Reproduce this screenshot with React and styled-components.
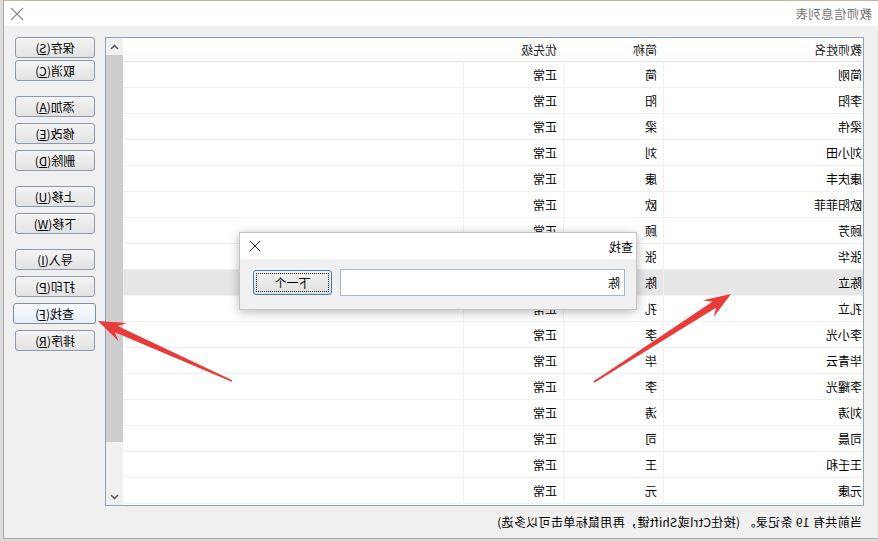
import styled, { createGlobalStyle } from "styled-components";

const GlobalStyle = createGlobalStyle`
    html, body {
        margin: 0;
        padding: 0;
        width: 878px;
        height: 541px;
        overflow: hidden;
        background: #dcdcdc;
        font-family: "Noto Sans CJK SC", "Noto Sans", sans-serif;
        font-size: 12px;
        color: #000;
    }
`;

const Page = styled.div`
    position: relative;
    width: 878px;
    height: 541px;
    overflow: hidden;
`;

/* the whole window is drawn right-to-left, as a mirror image */
const Stage = styled.div`
    width: 878px;
    height: 541px;
    transform: scaleX(-1);
`;

const Win = styled.div`
    position: relative;
    width: 874px;
    height: 537px;
    background: #f0f0f0;
    border-top: 1px solid #c6b79b;
    border-right: 1px solid #a8a8a8;
    border-bottom: 1px solid #a8a8a8;
    display: flex;
    flex-direction: column;
`;

const TitleBar = styled.div`
    height: 25px;
    flex: none;
    background: #fff;
    display: flex;
    align-items: center;
    justify-content: space-between;
    padding: 0 6px 0 6px;

    & span {
        font-size: 12.5px;
        letter-spacing: 0.3px;
        color: #747474;
    }
`;

const Body = styled.div`
    flex: 1;
    display: flex;
    flex-direction: column;
    padding: 11px 11px 0 14px;
`;

const MainRow = styled.div`
    display: flex;
    align-items: flex-start;
    gap: 10px;
`;

const TableFrame = styled.div`
    width: 758px;
    height: 467px;
    border: 1px solid #8ea2bb;
    background: #fff;
    display: flex;
    overflow: hidden;
`;

const ListArea = styled.div`
    flex: 1;
    display: flex;
    flex-direction: column;
`;

const Row = styled.div`
    display: grid;
    grid-template-columns: 200px 100px 100px 1fr;
    height: ${p => (p.$head ? "23px" : "25px")};
    border-bottom: 1px solid ${p => (p.$head ? "#e5e5e5" : "#f0f0f0")};
    background: ${p => (p.$head ? "linear-gradient(#ffffff, #fbfbfb)" : p.$selected ? "#e6e6e6" : "#fff")};
    color: ${p => (p.$head ? "#1e1e1e" : "#000")};
`;

const Cell = styled.div`
    display: flex;
    align-items: center;
    padding-left: ${p => (p.$first ? "1px" : "6px")};
    border-right: 1px solid ${p => (p.$head ? "transparent" : "#f0f0f0")};
    white-space: nowrap;
    line-height: 16px;

    &:last-child {
        border-right: 0;
    }
`;

const ScrollBar = styled.div`
    width: 17px;
    flex: none;
    background: #f0f0f0;
    display: flex;
    flex-direction: column;
`;

const ScrollArrow = styled.div`
    height: 17px;
    flex: none;
    display: flex;
    align-items: center;
    justify-content: center;
`;

const Thumb = styled.div`
    height: 387px;
    background: #cdcdcd;
`;

const ScrollTrack = styled.div`
    flex: 1;
`;

const ButtonColumn = styled.div`
    width: 80px;
    display: flex;
    flex-direction: column;
    gap: 15px;
`;

const ButtonGroup = styled.div`
    display: flex;
    flex-direction: column;
    gap: ${p => p.$gap}px;
`;

const Button = styled.button`
    height: 21px;
    padding: 0;
    font-family: inherit;
    font-size: 12px;
    color: #000;
    line-height: 16px;
    border: 1px solid ${p => (p.$hot ? "#7a8ea6" : "#8c9aab")};
    border-radius: 3px;
    background: ${p => (p.$hot ? "linear-gradient(#f8fbfe, #e6eef7)" : "linear-gradient(#f4f4f4, #e2e2e2)")};
    margin: ${p => (p.$hot ? "0 -2px 0 -1px" : "0")};
    width: ${p => (p.$hot ? "83px" : "100%")};

    & u {
        text-decoration: underline;
    }
`;

const StatusBar = styled.div`
    height: 31px;
    display: flex;
    align-items: center;
    padding-left: 2px;
    white-space: pre;
    letter-spacing: 0.35px;
    color: #000;
`;

const FindDialog = styled.div`
    position: absolute;
    left: 241px;
    top: 231px;
    width: 396px;
    height: 76px;
    background: #f0f0f0;
    border: 1px solid #c4c4c4;
    box-shadow: 0 2px 10px rgba(0, 0, 0, 0.28);
    display: flex;
    flex-direction: column;
`;

const DialogTitle = styled.div`
    height: 26px;
    background: #fff;
    display: flex;
    align-items: center;
    justify-content: space-between;
    padding: 0 9px 0 3px;
    font-size: 12px;
`;

const DialogBody = styled.div`
    display: flex;
    align-items: center;
    gap: 8px;
    padding: 10px 12px 0 11px;
`;

const FindInput = styled.input`
    width: 285px;
    height: 27px;
    box-sizing: border-box;
    border: 1px solid #a9b9cc;
    background: #fff;
    padding: 0 4px;
    font-family: inherit;
    font-size: 12px;
    color: #000;
    outline: none;
`;

const NextButton = styled.button`
    width: 79px;
    height: 25px;
    padding: 0;
    border: 1px solid #3c7fb1;
    border-radius: 3px;
    background: linear-gradient(#f2f2f2, #dedede);
    font-family: inherit;
    font-size: 12px;
    color: #000;
    position: relative;

    &::after {
        content: "";
        position: absolute;
        inset: 2px;
        border: 1px dotted #222;
    }
`;

const ArrowLayer = styled.svg`
    position: absolute;
    left: 0;
    top: 0;
    pointer-events: none;
`;

const rows = [
    ["简刚", "简"],
    ["李阳", "阳"],
    ["梁伟", "梁"],
    ["刘小田", "刘"],
    ["康庆丰", "康"],
    ["欧阳菲菲", "欧"],
    ["顾芳", "顾"],
    ["张华", "张"],
    ["陈立", "陈"],
    ["孔立", "孔"],
    ["李小光", "李"],
    ["毕青云", "毕"],
    ["李耀光", "李"],
    ["刘涛", "涛"],
    ["司晨", "司"],
    ["王壬和", "王"],
    ["元康", "元"],
];

const buttonGroups = [
    { gap: 2, items: [["保存", "S"], ["取消", "C"]] },
    { gap: 6, items: [["添加", "A"], ["修改", "E"], ["删除", "D"]] },
    { gap: 6, items: [["上移", "U"], ["下移", "W"]] },
    { gap: 6, items: [["导入", "I"], ["打印", "P"], ["查找", "F"], ["排序", "R"]] },
];

const CloseIcon = ({ color, size }) => (
    <svg width={size} height={size} viewBox="0 0 14 14">
        <path d="M1 1 L13 13 M13 1 L1 13" stroke={color} strokeWidth="1.1" fill="none" />
    </svg>
);

const Chevron = ({ down }) => (
    <svg width="9" height="6" viewBox="0 0 9 6">
        <path d={down ? "M1 1 L4.5 4.5 L8 1" : "M1 5 L4.5 1.5 L8 5"} stroke="#606060" strokeWidth="1.6" fill="none" />
    </svg>
);

// red annotation arrow, tapering shaft with a barbed head
const arrowPoints = (tail, tip) => {
    const dx = tip[0] - tail[0];
    const dy = tip[1] - tail[1];
    const len = Math.hypot(dx, dy);
    const ux = dx / len, uy = dy / len;
    const nx = -uy, ny = ux;
    const at = (d, w) => [tip[0] - ux * d + nx * w, tip[1] - uy * d + ny * w];
    const pts = [
        [tail[0] + nx * 0.8, tail[1] + ny * 0.8],
        at(20, 3.5),
        at(27, 10),
        tip,
        at(27, -10),
        at(20, -3.5),
        [tail[0] - nx * 0.8, tail[1] - ny * 0.8],
    ];
    return pts.map(p => p.join(",")).join(" ");
};

const App = () => {
    return (
        <Page>
            <GlobalStyle />
            <Stage>
                <Win>
                    <TitleBar>
                        <span>教师信息列表</span>
                        <CloseIcon color="#8a8a8a" size={14} />
                    </TitleBar>
                    <Body>
                        <MainRow>
                            <TableFrame>
                                <ListArea>
                                    <Row $head>
                                        <Cell $first $head>教师姓名</Cell>
                                        <Cell $head>简称</Cell>
                                        <Cell $head>优先级</Cell>
                                        <Cell $head></Cell>
                                    </Row>
                                    {rows.map(([name, short]) => (
                                        <Row key={name} $selected={name === "陈立"}>
                                            <Cell $first>{name}</Cell>
                                            <Cell>{short}</Cell>
                                            <Cell>正常</Cell>
                                            <Cell></Cell>
                                        </Row>
                                    ))}
                                </ListArea>
                                <ScrollBar>
                                    <ScrollArrow><Chevron /></ScrollArrow>
                                    <Thumb />
                                    <ScrollTrack />
                                    <ScrollArrow><Chevron down /></ScrollArrow>
                                </ScrollBar>
                            </TableFrame>
                            <ButtonColumn>
                                {buttonGroups.map((g, i) => (
                                    <ButtonGroup key={i} $gap={g.gap}>
                                        {g.items.map(([label, key]) => (
                                            <Button key={label} $hot={label === "查找"}>
                                                {label}(<u>{key}</u>)
                                            </Button>
                                        ))}
                                    </ButtonGroup>
                                ))}
                            </ButtonColumn>
                        </MainRow>
                        <StatusBar>当前共有 19 条记录。 (按住Ctrl或Shift键，再用鼠标单击可以多选)</StatusBar>
                    </Body>
                    <FindDialog>
                        <DialogTitle>
                            <span>查找</span>
                            <CloseIcon color="#222" size={12} />
                        </DialogTitle>
                        <DialogBody>
                            <FindInput readOnly value="陈" />
                            <NextButton>下一个</NextButton>
                        </DialogBody>
                    </FindDialog>
                </Win>
            </Stage>
            <ArrowLayer width="878" height="541">
                <polygon points={arrowPoints([232, 381], [98, 321])} fill="#ea3b3b" />
                <polygon points={arrowPoints([594, 382], [731, 294])} fill="#ea3b3b" />
            </ArrowLayer>
        </Page>
    );
};

export default App;
